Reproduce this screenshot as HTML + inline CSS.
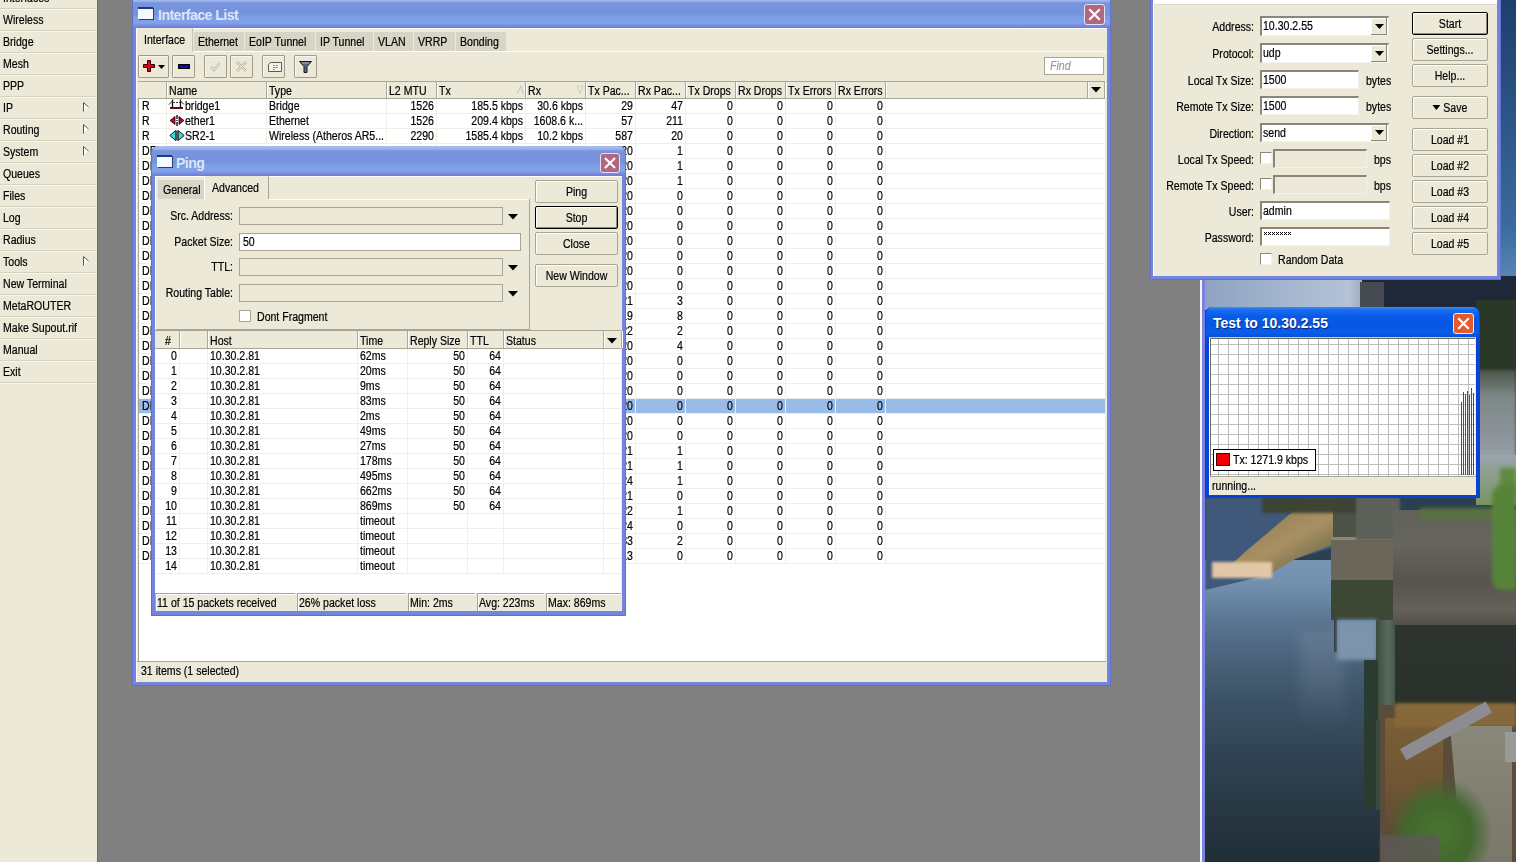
<!DOCTYPE html><html><head><meta charset="utf-8"><style>
*{box-sizing:border-box;margin:0;padding:0}
html,body{width:1516px;height:862px;overflow:hidden;background:#808080;position:relative}
body{font-family:"Liberation Sans", sans-serif;font-size:11px;color:#000}
.a{position:absolute}
.t{position:absolute;white-space:nowrap;line-height:15px;font-size:12px;margin-top:1px;transform:scaleX(0.88);transform-origin:0 0;-webkit-text-stroke:0.2px currentColor}
.r{text-align:right;transform-origin:100% 0}
.c{text-align:center;transform-origin:50% 0}
</style></head><body>
<div class="a" style="left:0;top:0;width:97px;height:862px;background:#ECE9D8"></div>
<div class="a" style="left:97px;top:0;width:1px;height:862px;background:#6F6E66"></div>
<div class="t" style="left:3px;top:-10px">Interfaces</div>
<div class="t" style="left:3px;top:12px">Wireless</div>
<div class="t" style="left:3px;top:34px">Bridge</div>
<div class="t" style="left:3px;top:56px">Mesh</div>
<div class="t" style="left:3px;top:78px">PPP</div>
<div class="t" style="left:3px;top:100px">IP</div>
<svg class="a" style="left:82px;top:101px" width="8" height="12" viewBox="0 0 8 12"><path d="M1.5 1 L1.5 10.5 L6.5 5.5 Z" fill="#fff" stroke="none"/><path d="M1.5 1.5 L1.5 10.5 M1.5 1.5 L6.5 6" stroke="#555" stroke-width="1" fill="none"/></svg>
<div class="t" style="left:3px;top:122px">Routing</div>
<svg class="a" style="left:82px;top:123px" width="8" height="12" viewBox="0 0 8 12"><path d="M1.5 1 L1.5 10.5 L6.5 5.5 Z" fill="#fff" stroke="none"/><path d="M1.5 1.5 L1.5 10.5 M1.5 1.5 L6.5 6" stroke="#555" stroke-width="1" fill="none"/></svg>
<div class="t" style="left:3px;top:144px">System</div>
<svg class="a" style="left:82px;top:145px" width="8" height="12" viewBox="0 0 8 12"><path d="M1.5 1 L1.5 10.5 L6.5 5.5 Z" fill="#fff" stroke="none"/><path d="M1.5 1.5 L1.5 10.5 M1.5 1.5 L6.5 6" stroke="#555" stroke-width="1" fill="none"/></svg>
<div class="t" style="left:3px;top:166px">Queues</div>
<div class="t" style="left:3px;top:188px">Files</div>
<div class="t" style="left:3px;top:210px">Log</div>
<div class="t" style="left:3px;top:232px">Radius</div>
<div class="t" style="left:3px;top:254px">Tools</div>
<svg class="a" style="left:82px;top:255px" width="8" height="12" viewBox="0 0 8 12"><path d="M1.5 1 L1.5 10.5 L6.5 5.5 Z" fill="#fff" stroke="none"/><path d="M1.5 1.5 L1.5 10.5 M1.5 1.5 L6.5 6" stroke="#555" stroke-width="1" fill="none"/></svg>
<div class="t" style="left:3px;top:276px">New Terminal</div>
<div class="t" style="left:3px;top:298px">MetaROUTER</div>
<div class="t" style="left:3px;top:320px">Make Supout.rif</div>
<div class="t" style="left:3px;top:342px">Manual</div>
<div class="t" style="left:3px;top:364px">Exit</div>
<div class="a" style="left:0;top:8px;width:96px;height:1px;background:#D6D2C2"></div>
<div class="a" style="left:0;top:9px;width:96px;height:1px;background:#F8F6EE"></div>
<div class="a" style="left:0;top:30px;width:96px;height:1px;background:#D6D2C2"></div>
<div class="a" style="left:0;top:31px;width:96px;height:1px;background:#F8F6EE"></div>
<div class="a" style="left:0;top:52px;width:96px;height:1px;background:#D6D2C2"></div>
<div class="a" style="left:0;top:53px;width:96px;height:1px;background:#F8F6EE"></div>
<div class="a" style="left:0;top:74px;width:96px;height:1px;background:#D6D2C2"></div>
<div class="a" style="left:0;top:75px;width:96px;height:1px;background:#F8F6EE"></div>
<div class="a" style="left:0;top:96px;width:96px;height:1px;background:#D6D2C2"></div>
<div class="a" style="left:0;top:97px;width:96px;height:1px;background:#F8F6EE"></div>
<div class="a" style="left:0;top:118px;width:96px;height:1px;background:#D6D2C2"></div>
<div class="a" style="left:0;top:119px;width:96px;height:1px;background:#F8F6EE"></div>
<div class="a" style="left:0;top:140px;width:96px;height:1px;background:#D6D2C2"></div>
<div class="a" style="left:0;top:141px;width:96px;height:1px;background:#F8F6EE"></div>
<div class="a" style="left:0;top:162px;width:96px;height:1px;background:#D6D2C2"></div>
<div class="a" style="left:0;top:163px;width:96px;height:1px;background:#F8F6EE"></div>
<div class="a" style="left:0;top:184px;width:96px;height:1px;background:#D6D2C2"></div>
<div class="a" style="left:0;top:185px;width:96px;height:1px;background:#F8F6EE"></div>
<div class="a" style="left:0;top:206px;width:96px;height:1px;background:#D6D2C2"></div>
<div class="a" style="left:0;top:207px;width:96px;height:1px;background:#F8F6EE"></div>
<div class="a" style="left:0;top:228px;width:96px;height:1px;background:#D6D2C2"></div>
<div class="a" style="left:0;top:229px;width:96px;height:1px;background:#F8F6EE"></div>
<div class="a" style="left:0;top:250px;width:96px;height:1px;background:#D6D2C2"></div>
<div class="a" style="left:0;top:251px;width:96px;height:1px;background:#F8F6EE"></div>
<div class="a" style="left:0;top:272px;width:96px;height:1px;background:#D6D2C2"></div>
<div class="a" style="left:0;top:273px;width:96px;height:1px;background:#F8F6EE"></div>
<div class="a" style="left:0;top:294px;width:96px;height:1px;background:#D6D2C2"></div>
<div class="a" style="left:0;top:295px;width:96px;height:1px;background:#F8F6EE"></div>
<div class="a" style="left:0;top:316px;width:96px;height:1px;background:#D6D2C2"></div>
<div class="a" style="left:0;top:317px;width:96px;height:1px;background:#F8F6EE"></div>
<div class="a" style="left:0;top:338px;width:96px;height:1px;background:#D6D2C2"></div>
<div class="a" style="left:0;top:339px;width:96px;height:1px;background:#F8F6EE"></div>
<div class="a" style="left:0;top:360px;width:96px;height:1px;background:#D6D2C2"></div>
<div class="a" style="left:0;top:361px;width:96px;height:1px;background:#F8F6EE"></div>
<div class="a" style="left:0;top:382px;width:96px;height:1px;background:#D6D2C2"></div>
<div class="a" style="left:0;top:383px;width:96px;height:1px;background:#F8F6EE"></div>
<div class="a" style="left:1200px;top:0;width:2px;height:862px;background:#F4F4FA"></div>
<div class="a" style="left:1202px;top:0;width:3px;height:862px;background:#7A84E0"></div>
<div class="a" style="left:1205px;top:0;width:311px;height:862px;overflow:hidden;background:#2B3F52">
<div class="a" style="left:290px;top:0px;width:21px;height:282px;background:linear-gradient(#1E3E6E,#2C5484 40%,#3A6A9E 80%,#5A88B8);"></div>
<div class="a" style="left:0px;top:276px;width:160px;height:34px;background:linear-gradient(90deg,#8FA4C2,#A4B6CE 50%,#B4C2D6 90%,#9AA8B8);"></div>
<div class="a" style="left:157px;top:276px;width:154px;height:34px;background:#1F2838;"></div>
<div class="a" style="left:155px;top:282px;width:24px;height:28px;background:#454A50;"></div>
<div class="a" style="left:271px;top:300px;width:40px;height:80px;background:#2A3828;"></div>
<div class="a" style="left:271px;top:370px;width:40px;height:90px;background:linear-gradient(#4A5448,#7E8888 30%,#8A9298 70%,#9AA2AA);filter:blur(1.5px)"></div>
<div class="a" style="left:271px;top:455px;width:40px;height:50px;background:linear-gradient(#9AA4AC,#7A9460);"></div>
<div class="a" style="left:295px;top:468px;width:16px;height:30px;background:#5E8A40;filter:blur(2px)"></div>
<div class="a" style="left:0px;top:560px;width:175px;height:302px;background:linear-gradient(#7896B4 0px,#7290AE 25px,#5A7692 60px,#4A627A 100px,#3C5266 140px,#2F4252 200px,#263641 260px,#1F2D37 302px);"></div>
<div class="a" style="left:95px;top:630px;width:45px;height:100px;background:linear-gradient(#6E8298,rgba(90,110,130,0));filter:blur(6px);opacity:0.6"></div>
<div class="a" style="left:0;top:497px;width:130px;height:95px;background:#40587A;clip-path:polygon(0 0,130px 0,130px 50px,90px 62px,55px 80px,0 93px);filter:blur(1px)"></div>
<div class="a" style="left:10px;top:497px;width:125px;height:85px;background:linear-gradient(150deg,rgba(0,0,0,0) 20%,#9A8458 35%,#A89062 55%,#7E7450 75%,#5C6050 95%);clip-path:polygon(95px 0,125px 0,125px 45px,80px 62px,50px 80px,5px 78px,30px 55px);filter:blur(1.5px)"></div>
<div class="a" style="left:128px;top:497px;width:25px;height:42px;background:#4C5246;"></div>
<div class="a" style="left:7px;top:562px;width:60px;height:16px;background:#E2C8A8;filter:blur(1.5px)"></div>
<div class="a" style="left:57px;top:497px;width:100px;height:16px;background:#3E4434;filter:blur(1.5px)"></div>
<div class="a" style="left:126px;top:537px;width:65px;height:43px;background:#6C665A;"></div>
<div class="a" style="left:126px;top:537px;width:65px;height:3px;background:#8A887E;"></div>
<div class="a" style="left:126px;top:580px;width:65px;height:40px;background:#3C4834;"></div>
<div class="a" style="left:129px;top:620px;width:3px;height:32px;background:#2A3440;"></div>
<div class="a" style="left:132px;top:620px;width:40px;height:40px;background:#7E94AC;filter:blur(2px)"></div>
<div class="a" style="left:171px;top:620px;width:24px;height:100px;background:linear-gradient(90deg,#3A4A40,#5A6A5A 50%,#3A4A40);"></div>
<div class="a" style="left:159px;top:660px;width:14px;height:150px;background:#2A3C30;"></div>
<div class="a" style="left:151px;top:497px;width:44px;height:43px;background:#5E605A;filter:blur(1px)"></div>
<div class="a" style="left:188px;top:510px;width:123px;height:117px;background:linear-gradient(#62625A,#66645E 30%,#56544E 60%,#64605A 85%,#504C46);"></div>
<div class="a" style="left:215px;top:508px;width:80px;height:12px;background:#5A7040;filter:blur(2px)"></div>
<div class="a" style="left:287px;top:485px;width:24px;height:105px;background:#58843A;filter:blur(2px);border-radius:10px 0 0 10px"></div>
<div class="a" style="left:190px;top:625px;width:121px;height:88px;background:linear-gradient(#2E3530,#2A302A);"></div>
<div class="a" style="left:171px;top:720px;width:24px;height:90px;background:#3A4A3E;"></div>
<div class="a" style="left:175px;top:705px;width:136px;height:157px;background:#5A4C3A;"></div>
<div class="a" style="left:180px;top:718px;width:58px;height:144px;background:linear-gradient(#7A6038,#6E5432 50%,#5E4A34 80%,#5A5048);"></div>
<div class="a" style="left:190px;top:703px;width:121px;height:24px;background:#86683A;filter:blur(1.5px)"></div>
<div class="a" style="left:245px;top:726px;width:62px;height:136px;background:linear-gradient(#8A887A,#7A786A);clip-path:polygon(0 0,100% 0,100% 100%,12px 100%)"></div>
<div class="a" style="left:300px;top:732px;width:11px;height:30px;background:#9A9A98;"></div>
<div class="a" style="left:195px;top:749px;width:98px;height:13px;background:#8C8C92;transform:rotate(-29deg);transform-origin:0 0"></div>
<div class="a" style="left:185px;top:780px;width:100px;height:82px;background:radial-gradient(ellipse at 50% 65%,#4A7630 0%,#42682E 45%,rgba(66,104,46,0) 75%);"></div>
<div class="a" style="left:175px;top:835px;width:60px;height:27px;background:#5E5856;filter:blur(1px);opacity:0.8"></div>
</div>
<div class="a" style="left:1150px;top:-40px;width:351px;height:320px;background:#7485DE;box-shadow:inset 1px 0 0 #6272CC,inset -1px 0 0 #6272CC,inset 0 -1px 0 #5E6ECA"></div>
<div class="a" style="left:1153px;top:0;width:344px;height:276px;background:#ECE9D8;border-left:1px solid #fff"></div>
<div class="a" style="left:1154px;top:0;width:343px;height:4px;background:#fff"></div>
<div class="a" style="left:1154px;top:4px;width:343px;height:1px;background:#DDDACB"></div>
<div class="t r" style="left:1150px;width:104px;top:19px">Address:</div>
<div class="t r" style="left:1150px;width:104px;top:46px">Protocol:</div>
<div class="t r" style="left:1150px;width:104px;top:73px">Local Tx Size:</div>
<div class="t r" style="left:1150px;width:104px;top:99px">Remote Tx Size:</div>
<div class="t r" style="left:1150px;width:104px;top:126px">Direction:</div>
<div class="t r" style="left:1150px;width:104px;top:152px">Local Tx Speed:</div>
<div class="t r" style="left:1150px;width:104px;top:178px">Remote Tx Speed:</div>
<div class="t r" style="left:1150px;width:104px;top:204px">User:</div>
<div class="t r" style="left:1150px;width:104px;top:230px">Password:</div>
<div class="a" style="left:1260px;top:16px;width:129px;height:20px;background:#fff;border-top:2px solid #8A877A;border-left:2px solid #8A877A;border-right:1px solid #F4F2EA;border-bottom:1px solid #F4F2EA"></div>
<div class="t" style="left:1263px;top:18px">10.30.2.55</div>
<div class="a" style="left:1371px;top:18px;width:16px;height:17px;background:#ECE9D8;border-right:1px solid #8A877A;border-bottom:1px solid #8A877A;box-shadow:inset 1px 1px 0 #fff"></div>
<svg class="a" style="left:1375px;top:24px" width="9" height="5"><path d="M0 0h9l-4.5 5z" fill="#000"/></svg>
<div class="a" style="left:1260px;top:43px;width:129px;height:20px;background:#fff;border-top:2px solid #8A877A;border-left:2px solid #8A877A;border-right:1px solid #F4F2EA;border-bottom:1px solid #F4F2EA"></div>
<div class="t" style="left:1263px;top:45px">udp</div>
<div class="a" style="left:1371px;top:45px;width:16px;height:17px;background:#ECE9D8;border-right:1px solid #8A877A;border-bottom:1px solid #8A877A;box-shadow:inset 1px 1px 0 #fff"></div>
<svg class="a" style="left:1375px;top:51px" width="9" height="5"><path d="M0 0h9l-4.5 5z" fill="#000"/></svg>
<div class="a" style="left:1260px;top:70px;width:99px;height:19px;background:#fff;border-top:2px solid #8A877A;border-left:2px solid #8A877A;border-right:1px solid #F4F2EA;border-bottom:1px solid #F4F2EA"></div>
<div class="t" style="left:1263px;top:72px">1500</div>
<div class="t" style="left:1366px;top:73px">bytes</div>
<div class="a" style="left:1260px;top:96px;width:99px;height:19px;background:#fff;border-top:2px solid #8A877A;border-left:2px solid #8A877A;border-right:1px solid #F4F2EA;border-bottom:1px solid #F4F2EA"></div>
<div class="t" style="left:1263px;top:98px">1500</div>
<div class="t" style="left:1366px;top:99px">bytes</div>
<div class="a" style="left:1260px;top:123px;width:129px;height:19px;background:#fff;border-top:2px solid #8A877A;border-left:2px solid #8A877A;border-right:1px solid #F4F2EA;border-bottom:1px solid #F4F2EA"></div>
<div class="t" style="left:1263px;top:125px">send</div>
<div class="a" style="left:1371px;top:125px;width:16px;height:16px;background:#ECE9D8;border-right:1px solid #8A877A;border-bottom:1px solid #8A877A;box-shadow:inset 1px 1px 0 #fff"></div>
<svg class="a" style="left:1375px;top:130px" width="9" height="5"><path d="M0 0h9l-4.5 5z" fill="#000"/></svg>
<div class="a" style="left:1260px;top:152px;width:12px;height:12px;background:#fff;border-top:1px solid #8A877A;border-left:1px solid #8A877A;border-right:1px solid #F4F2EA;border-bottom:1px solid #F4F2EA"></div>
<div class="a" style="left:1273px;top:149px;width:94px;height:19px;background:#ECE9D8;border-top:2px solid #8A877A;border-left:2px solid #8A877A;border-right:1px solid #F4F2EA;border-bottom:1px solid #F4F2EA"></div>
<div class="t" style="left:1374px;top:152px">bps</div>
<div class="a" style="left:1260px;top:178px;width:12px;height:12px;background:#fff;border-top:1px solid #8A877A;border-left:1px solid #8A877A;border-right:1px solid #F4F2EA;border-bottom:1px solid #F4F2EA"></div>
<div class="a" style="left:1273px;top:175px;width:94px;height:19px;background:#ECE9D8;border-top:2px solid #8A877A;border-left:2px solid #8A877A;border-right:1px solid #F4F2EA;border-bottom:1px solid #F4F2EA"></div>
<div class="t" style="left:1374px;top:178px">bps</div>
<div class="a" style="left:1260px;top:201px;width:130px;height:19px;background:#fff;border-top:2px solid #8A877A;border-left:2px solid #8A877A;border-right:1px solid #F4F2EA;border-bottom:1px solid #F4F2EA"></div>
<div class="t" style="left:1263px;top:203px">admin</div>
<div class="a" style="left:1260px;top:227px;width:130px;height:19px;background:#fff;border-top:2px solid #8A877A;border-left:2px solid #8A877A;border-right:1px solid #F4F2EA;border-bottom:1px solid #F4F2EA"></div>
<svg class="a" style="left:1264px;top:232px" width="28" height="3" shape-rendering="crispEdges"><rect x="0" y="0" width="1" height="1"/><rect x="2" y="0" width="1" height="1"/><rect x="1" y="1" width="1" height="1"/><rect x="0" y="2" width="1" height="1"/><rect x="2" y="2" width="1" height="1"/><rect x="4" y="0" width="1" height="1"/><rect x="6" y="0" width="1" height="1"/><rect x="5" y="1" width="1" height="1"/><rect x="4" y="2" width="1" height="1"/><rect x="6" y="2" width="1" height="1"/><rect x="8" y="0" width="1" height="1"/><rect x="10" y="0" width="1" height="1"/><rect x="9" y="1" width="1" height="1"/><rect x="8" y="2" width="1" height="1"/><rect x="10" y="2" width="1" height="1"/><rect x="12" y="0" width="1" height="1"/><rect x="14" y="0" width="1" height="1"/><rect x="13" y="1" width="1" height="1"/><rect x="12" y="2" width="1" height="1"/><rect x="14" y="2" width="1" height="1"/><rect x="16" y="0" width="1" height="1"/><rect x="18" y="0" width="1" height="1"/><rect x="17" y="1" width="1" height="1"/><rect x="16" y="2" width="1" height="1"/><rect x="18" y="2" width="1" height="1"/><rect x="20" y="0" width="1" height="1"/><rect x="22" y="0" width="1" height="1"/><rect x="21" y="1" width="1" height="1"/><rect x="20" y="2" width="1" height="1"/><rect x="22" y="2" width="1" height="1"/><rect x="24" y="0" width="1" height="1"/><rect x="26" y="0" width="1" height="1"/><rect x="25" y="1" width="1" height="1"/><rect x="24" y="2" width="1" height="1"/><rect x="26" y="2" width="1" height="1"/></svg>
<div class="a" style="left:1260px;top:253px;width:12px;height:12px;background:#fff;border-top:1px solid #8A877A;border-left:1px solid #8A877A;border-right:1px solid #F4F2EA;border-bottom:1px solid #F4F2EA"></div>
<div class="t" style="left:1278px;top:252px">Random Data</div>
<div class="a" style="left:1412px;top:12px;width:76px;height:23px;border:1px solid #000;border-radius:2px;background:#ECE9D8;box-shadow:inset 1px 1px 0 #fff, inset -1px -1px 0 #8E8B7C"></div>
<div class="t c" style="left:1412px;top:16px;width:76px">Start</div>
<div class="a" style="left:1412px;top:38px;width:76px;height:23px;border:1px solid #A8A594;border-radius:2px;background:#ECE9D8;box-shadow:inset 1px 1px 0 #fff"></div>
<div class="t c" style="left:1412px;top:42px;width:76px">Settings...</div>
<div class="a" style="left:1412px;top:64px;width:76px;height:23px;border:1px solid #A8A594;border-radius:2px;background:#ECE9D8;box-shadow:inset 1px 1px 0 #fff"></div>
<div class="t c" style="left:1412px;top:68px;width:76px">Help...</div>
<div class="a" style="left:1412px;top:96px;width:76px;height:23px;border:1px solid #A8A594;border-radius:2px;background:#ECE9D8;box-shadow:inset 1px 1px 0 #fff"></div>
<div class="t c" style="left:1412px;top:100px;width:76px"><svg width="9" height="6" style="margin-right:3px;vertical-align:1px"><path d="M0 0h9l-4.5 5z" fill="#000"/></svg>Save</div>
<div class="a" style="left:1412px;top:128px;width:76px;height:23px;border:1px solid #A8A594;border-radius:2px;background:#ECE9D8;box-shadow:inset 1px 1px 0 #fff"></div>
<div class="t c" style="left:1412px;top:132px;width:76px">Load #1</div>
<div class="a" style="left:1412px;top:154px;width:76px;height:23px;border:1px solid #A8A594;border-radius:2px;background:#ECE9D8;box-shadow:inset 1px 1px 0 #fff"></div>
<div class="t c" style="left:1412px;top:158px;width:76px">Load #2</div>
<div class="a" style="left:1412px;top:180px;width:76px;height:23px;border:1px solid #A8A594;border-radius:2px;background:#ECE9D8;box-shadow:inset 1px 1px 0 #fff"></div>
<div class="t c" style="left:1412px;top:184px;width:76px">Load #3</div>
<div class="a" style="left:1412px;top:206px;width:76px;height:23px;border:1px solid #A8A594;border-radius:2px;background:#ECE9D8;box-shadow:inset 1px 1px 0 #fff"></div>
<div class="t c" style="left:1412px;top:210px;width:76px">Load #4</div>
<div class="a" style="left:1412px;top:232px;width:76px;height:23px;border:1px solid #A8A594;border-radius:2px;background:#ECE9D8;box-shadow:inset 1px 1px 0 #fff"></div>
<div class="t c" style="left:1412px;top:236px;width:76px">Load #5</div>
<div class="a" style="left:1205px;top:307px;width:275px;height:191px;background:#0842D6;border-radius:7px 7px 0 0"></div>
<div class="a" style="left:1206px;top:307px;width:273px;height:30px;border-radius:7px 7px 0 0;background:linear-gradient(#3C8CF8 0%,#1A6CF0 10%,#0A5CE8 30%,#0456E4 60%,#0A5EEA 85%,#0650DC 100%)"></div>
<div class="a" style="left:1213px;top:315px;font-weight:bold;font-size:14px;line-height:16px;color:#fff;white-space:nowrap;text-shadow:1px 1px 0 #0A2A80">Test to 10.30.2.55</div>
<div class="a" style="left:1453px;top:313px;width:21px;height:21px;background:#E25A30;border:1px solid #F4F0EE;border-radius:3px"></div>
<svg class="a" style="left:1453px;top:313px" width="21" height="21" viewBox="0 0 21 21"><path d="M6 6 L15 15 M15 6 L6 15" stroke="#fff" stroke-width="2.2" stroke-linecap="square"/></svg>
<div class="a" style="left:1209px;top:337px;width:267px;height:158px;background:#ECE9D8;border-left:1px solid #fff;border-top:1px solid #B8C8F0"></div>
<div class="a" style="left:1210px;top:338px;width:265px;height:138px;background-color:#fff;background-image:repeating-linear-gradient(90deg,transparent 0 7px,#BDBDBD 7px 8px,transparent 8px 10px),repeating-linear-gradient(180deg,transparent 0 5px,#BDBDBD 5px 6px,transparent 6px 10px);border-top:1px solid #6E6C64;border-left:1px solid #6E6C64"></div>
<div class="a" style="left:1461px;top:402px;width:1px;height:73px;background:#D01818"></div>
<div class="a" style="left:1463px;top:392px;width:1px;height:83px;background:#D01818"></div>
<div class="a" style="left:1465px;top:394px;width:1px;height:81px;background:#D01818"></div>
<div class="a" style="left:1467px;top:391px;width:1px;height:84px;background:#D01818"></div>
<div class="a" style="left:1469px;top:395px;width:1px;height:80px;background:#D01818"></div>
<div class="a" style="left:1471px;top:388px;width:1px;height:87px;background:#D01818"></div>
<div class="a" style="left:1473px;top:393px;width:1px;height:82px;background:#D01818"></div>
<div class="a" style="left:1213px;top:449px;width:103px;height:22px;background:#fff;border:1px solid #000"></div>
<div class="a" style="left:1216px;top:453px;width:14px;height:13px;background:#F00000;border:1px solid #500"></div>
<div class="t" style="left:1233px;top:452px">Tx: 1271.9 kbps</div>
<div class="a" style="left:1210px;top:476px;width:266px;height:1px;background:#A8A594"></div>
<div class="t" style="left:1212px;top:478px">running...</div>
<div class="a" style="left:132px;top:-2px;width:979px;height:688px;background:#7485DE;border-radius:2px 2px 0 0;box-shadow:inset 1px 0 0 #6272CC,inset -1px 0 0 #6272CC,inset 0 -1px 0 #5E6ECA"></div>
<div class="a" style="left:133px;top:-2px;width:977px;height:30px;background:linear-gradient(#A6C0F2 0px,#9CB4EE 3px,#7994DC 5px,#7592DC 16px,#7E9EE6 19px,#80A2E8 25px,#7888DC 28px,#6E7CD0 30px);border-radius:2px 2px 0 0"></div>
<div class="a" style="left:136px;top:28px;width:971px;height:654px;background:#ECE9D8;border-top:1px solid #fff;border-left:1px solid #fff"></div>
<div class="a" style="left:138px;top:7px;width:15px;height:12px;background:#F4F8FF;border-top:2px solid #1E3C78;box-shadow:1px 1px 0 #2A3C70"></div>
<div class="a" style="left:158px;top:8px;font-weight:bold;font-size:14px;letter-spacing:-0.5px;line-height:15px;color:#DCE6FA;white-space:nowrap">Interface List</div>
<div class="a" style="left:1084px;top:4px;width:21px;height:21px;background:#B0687E;border:1px solid #E8E0F4;border-radius:3px"></div>
<svg class="a" style="left:1084px;top:4px" width="21" height="21" viewBox="0 0 21 21"><path d="M6 6 L15 15 M15 6 L6 15" stroke="#fff" stroke-width="2.2" stroke-linecap="square"/></svg>
<div class="a" style="left:193px;top:51px;width:913px;height:1px;background:#FFFFFF"></div>
<div class="a" style="left:136px;top:28px;width:57px;height:24px;background:#ECE9D8;border-left:1px solid #fff;border-right:1px solid #C8C4B4"></div>
<div class="t" style="left:144px;top:32px">Interface</div>
<div class="a" style="left:194px;top:32px;width:50px;height:19px;background:#D8D4C6"></div>
<div class="t" style="left:198px;top:34px">Ethernet</div>
<div class="a" style="left:245px;top:32px;width:70px;height:19px;background:#D8D4C6"></div>
<div class="t" style="left:249px;top:34px">EoIP Tunnel</div>
<div class="a" style="left:316px;top:32px;width:57px;height:19px;background:#D8D4C6"></div>
<div class="t" style="left:320px;top:34px">IP Tunnel</div>
<div class="a" style="left:374px;top:32px;width:39px;height:19px;background:#D8D4C6"></div>
<div class="t" style="left:378px;top:34px">VLAN</div>
<div class="a" style="left:414px;top:32px;width:41px;height:19px;background:#D8D4C6"></div>
<div class="t" style="left:418px;top:34px">VRRP</div>
<div class="a" style="left:456px;top:32px;width:50px;height:19px;background:#D8D4C6"></div>
<div class="t" style="left:460px;top:34px">Bonding</div>
<div class="a" style="left:138px;top:55px;width:31px;height:23px;border:1px solid #A09C8C;border-radius:1px;background:#ECE9D8;box-shadow:inset 1px 1px 0 #F8F6EE"></div>
<div class="a" style="left:172px;top:55px;width:23px;height:23px;border:1px solid #A09C8C;border-radius:1px;background:#ECE9D8;box-shadow:inset 1px 1px 0 #F8F6EE"></div>
<div class="a" style="left:204px;top:55px;width:23px;height:23px;border:1px solid #A09C8C;border-radius:1px;background:#ECE9D8;box-shadow:inset 1px 1px 0 #F8F6EE"></div>
<div class="a" style="left:230px;top:55px;width:23px;height:23px;border:1px solid #A09C8C;border-radius:1px;background:#ECE9D8;box-shadow:inset 1px 1px 0 #F8F6EE"></div>
<div class="a" style="left:262px;top:55px;width:23px;height:23px;border:1px solid #A09C8C;border-radius:1px;background:#ECE9D8;box-shadow:inset 1px 1px 0 #F8F6EE"></div>
<div class="a" style="left:294px;top:55px;width:23px;height:23px;border:1px solid #A09C8C;border-radius:1px;background:#ECE9D8;box-shadow:inset 1px 1px 0 #F8F6EE"></div>
<svg class="a" style="left:143px;top:60px" width="24" height="14" viewBox="0 0 24 14"><path d="M4.5 0.5h3v4h4v3h-4v4h-3v-4h-4v-3h4z" fill="#E00018" stroke="#300" stroke-width="1"/><path d="M15 5h7l-3.5 4z" fill="#000"/></svg>
<div class="a" style="left:178px;top:64px;width:12px;height:5px;background:#0A0AB0;border:1px solid #000"></div>
<svg class="a" style="left:204px;top:55px" width="23" height="23" viewBox="0 0 23 23"><path d="M7 12 L10 15 L16 8" stroke="#BDB9A8" stroke-width="2.5" fill="none"/><path d="M7 12 L10 15 L16 8" stroke="#F4F2EA" stroke-width="1" fill="none"/></svg>
<svg class="a" style="left:230px;top:55px" width="23" height="23" viewBox="0 0 23 23"><path d="M7 7 L16 16 M16 7 L7 16" stroke="#BDB9A8" stroke-width="2.6" fill="none"/><path d="M7 7 L16 16 M16 7 L7 16" stroke="#F4F2EA" stroke-width="1" fill="none"/></svg>
<svg class="a" style="left:262px;top:55px" width="23" height="23" viewBox="0 0 23 23"><path d="M6.5 9.5 l2-2 h11 v9 h-13 z" stroke="#5A5A56" stroke-width="1" fill="#F4F2EA"/><path d="M11 10.5h2 M14 10.5h2 M11 12.5h5 M11 14.5h2" stroke="#9A9890" stroke-width="1"/></svg>
<svg class="a" style="left:294px;top:55px" width="23" height="23" viewBox="0 0 23 23"><path d="M5.5 6.5 h12 l-4.5 5 v6 h-3 v-6 z" fill="#5A6A80" stroke="#101820" stroke-width="1"/><path d="M8 8h7" stroke="#A0B0C8" stroke-width="1"/></svg>
<div class="a" style="left:1044px;top:57px;width:60px;height:18px;background:#fff;border:1px solid #A8A594"></div>
<div class="t" style="left:1050px;top:58px;color:#9A9A9A;font-style:italic">Find</div>
<div class="a" style="left:138px;top:81px;width:967px;height:581px;background:#fff;border-left:1px solid #A8A594"></div>
<div class="a" style="left:138px;top:81px;width:967px;height:18px;background:#ECE9D8;border-top:1px solid #A8A594;border-bottom:1px solid #A8A594"></div>
<div class="a" style="left:166px;top:82px;width:1px;height:16px;background:#ACA899"></div>
<div class="a" style="left:167px;top:82px;width:1px;height:16px;background:#FFFFFF"></div>
<div class="a" style="left:266px;top:82px;width:1px;height:16px;background:#ACA899"></div>
<div class="a" style="left:267px;top:82px;width:1px;height:16px;background:#FFFFFF"></div>
<div class="t" style="left:169px;top:83px">Name</div>
<div class="a" style="left:386px;top:82px;width:1px;height:16px;background:#ACA899"></div>
<div class="a" style="left:387px;top:82px;width:1px;height:16px;background:#FFFFFF"></div>
<div class="t" style="left:269px;top:83px">Type</div>
<div class="a" style="left:436px;top:82px;width:1px;height:16px;background:#ACA899"></div>
<div class="a" style="left:437px;top:82px;width:1px;height:16px;background:#FFFFFF"></div>
<div class="t" style="left:389px;top:83px">L2 MTU</div>
<div class="a" style="left:525px;top:82px;width:1px;height:16px;background:#ACA899"></div>
<div class="a" style="left:526px;top:82px;width:1px;height:16px;background:#FFFFFF"></div>
<div class="t" style="left:439px;top:83px">Tx</div>
<div class="a" style="left:585px;top:82px;width:1px;height:16px;background:#ACA899"></div>
<div class="a" style="left:586px;top:82px;width:1px;height:16px;background:#FFFFFF"></div>
<div class="t" style="left:528px;top:83px">Rx</div>
<div class="a" style="left:635px;top:82px;width:1px;height:16px;background:#ACA899"></div>
<div class="a" style="left:636px;top:82px;width:1px;height:16px;background:#FFFFFF"></div>
<div class="t" style="left:588px;top:83px">Tx Pac...</div>
<div class="a" style="left:685px;top:82px;width:1px;height:16px;background:#ACA899"></div>
<div class="a" style="left:686px;top:82px;width:1px;height:16px;background:#FFFFFF"></div>
<div class="t" style="left:638px;top:83px">Rx Pac...</div>
<div class="a" style="left:735px;top:82px;width:1px;height:16px;background:#ACA899"></div>
<div class="a" style="left:736px;top:82px;width:1px;height:16px;background:#FFFFFF"></div>
<div class="t" style="left:688px;top:83px">Tx Drops</div>
<div class="a" style="left:785px;top:82px;width:1px;height:16px;background:#ACA899"></div>
<div class="a" style="left:786px;top:82px;width:1px;height:16px;background:#FFFFFF"></div>
<div class="t" style="left:738px;top:83px">Rx Drops</div>
<div class="a" style="left:835px;top:82px;width:1px;height:16px;background:#ACA899"></div>
<div class="a" style="left:836px;top:82px;width:1px;height:16px;background:#FFFFFF"></div>
<div class="t" style="left:788px;top:83px">Tx Errors</div>
<div class="a" style="left:885px;top:82px;width:1px;height:16px;background:#ACA899"></div>
<div class="a" style="left:886px;top:82px;width:1px;height:16px;background:#FFFFFF"></div>
<div class="t" style="left:838px;top:83px">Rx Errors</div>
<div class="a" style="left:1087px;top:82px;width:1px;height:16px;background:#ACA899"></div>
<div class="a" style="left:1088px;top:82px;width:1px;height:16px;background:#FFFFFF"></div>
<div class="a" style="left:1104px;top:82px;width:1px;height:16px;background:#ACA899"></div>
<div class="a" style="left:1105px;top:82px;width:1px;height:16px;background:#FFFFFF"></div>
<svg class="a" style="left:516px;top:85px" width="8" height="10"><path d="M1 9 L5 1 L7 9" stroke="#C8C4B4" fill="none"/></svg>
<svg class="a" style="left:576px;top:85px" width="8" height="10"><path d="M1 1 L4 9 L7 1 Z" stroke="#D4D0C0" fill="none"/></svg>
<svg class="a" style="left:1091px;top:87px" width="10" height="6"><path d="M0 0h10l-5 5.5z" fill="#000"/></svg>
<div class="a" style="left:139px;top:113px;width:966px;height:1px;background:#EFEFE8"></div>
<div class="a" style="left:139px;top:128px;width:966px;height:1px;background:#EFEFE8"></div>
<div class="a" style="left:139px;top:143px;width:966px;height:1px;background:#EFEFE8"></div>
<div class="a" style="left:139px;top:158px;width:966px;height:1px;background:#EFEFE8"></div>
<div class="a" style="left:139px;top:173px;width:966px;height:1px;background:#EFEFE8"></div>
<div class="a" style="left:139px;top:188px;width:966px;height:1px;background:#EFEFE8"></div>
<div class="a" style="left:139px;top:203px;width:966px;height:1px;background:#EFEFE8"></div>
<div class="a" style="left:139px;top:218px;width:966px;height:1px;background:#EFEFE8"></div>
<div class="a" style="left:139px;top:233px;width:966px;height:1px;background:#EFEFE8"></div>
<div class="a" style="left:139px;top:248px;width:966px;height:1px;background:#EFEFE8"></div>
<div class="a" style="left:139px;top:263px;width:966px;height:1px;background:#EFEFE8"></div>
<div class="a" style="left:139px;top:278px;width:966px;height:1px;background:#EFEFE8"></div>
<div class="a" style="left:139px;top:293px;width:966px;height:1px;background:#EFEFE8"></div>
<div class="a" style="left:139px;top:308px;width:966px;height:1px;background:#EFEFE8"></div>
<div class="a" style="left:139px;top:323px;width:966px;height:1px;background:#EFEFE8"></div>
<div class="a" style="left:139px;top:338px;width:966px;height:1px;background:#EFEFE8"></div>
<div class="a" style="left:139px;top:353px;width:966px;height:1px;background:#EFEFE8"></div>
<div class="a" style="left:139px;top:368px;width:966px;height:1px;background:#EFEFE8"></div>
<div class="a" style="left:139px;top:383px;width:966px;height:1px;background:#EFEFE8"></div>
<div class="a" style="left:139px;top:398px;width:966px;height:1px;background:#EFEFE8"></div>
<div class="a" style="left:139px;top:399px;width:966px;height:14px;background:#99BBE8"></div>
<div class="a" style="left:139px;top:413px;width:966px;height:1px;background:#EFEFE8"></div>
<div class="a" style="left:139px;top:428px;width:966px;height:1px;background:#EFEFE8"></div>
<div class="a" style="left:139px;top:443px;width:966px;height:1px;background:#EFEFE8"></div>
<div class="a" style="left:139px;top:458px;width:966px;height:1px;background:#EFEFE8"></div>
<div class="a" style="left:139px;top:473px;width:966px;height:1px;background:#EFEFE8"></div>
<div class="a" style="left:139px;top:488px;width:966px;height:1px;background:#EFEFE8"></div>
<div class="a" style="left:139px;top:503px;width:966px;height:1px;background:#EFEFE8"></div>
<div class="a" style="left:139px;top:518px;width:966px;height:1px;background:#EFEFE8"></div>
<div class="a" style="left:139px;top:533px;width:966px;height:1px;background:#EFEFE8"></div>
<div class="a" style="left:139px;top:548px;width:966px;height:1px;background:#EFEFE8"></div>
<div class="a" style="left:139px;top:563px;width:966px;height:1px;background:#EFEFE8"></div>
<div class="a" style="left:166px;top:99px;width:1px;height:465px;background:#F0EFE6"></div>
<div class="a" style="left:266px;top:99px;width:1px;height:465px;background:#F0EFE6"></div>
<div class="a" style="left:386px;top:99px;width:1px;height:465px;background:#F0EFE6"></div>
<div class="a" style="left:436px;top:99px;width:1px;height:465px;background:#F0EFE6"></div>
<div class="a" style="left:525px;top:99px;width:1px;height:465px;background:#F0EFE6"></div>
<div class="a" style="left:585px;top:99px;width:1px;height:465px;background:#F0EFE6"></div>
<div class="a" style="left:635px;top:99px;width:1px;height:465px;background:#F0EFE6"></div>
<div class="a" style="left:685px;top:99px;width:1px;height:465px;background:#F0EFE6"></div>
<div class="a" style="left:735px;top:99px;width:1px;height:465px;background:#F0EFE6"></div>
<div class="a" style="left:785px;top:99px;width:1px;height:465px;background:#F0EFE6"></div>
<div class="a" style="left:835px;top:99px;width:1px;height:465px;background:#F0EFE6"></div>
<div class="a" style="left:885px;top:99px;width:1px;height:465px;background:#F0EFE6"></div>
<div class="t" style="left:142px;top:98px">R</div>
<div class="t" style="left:185px;top:98px">bridge1</div>
<div class="t" style="left:269px;top:98px">Bridge</div>
<div class="t r" style="left:386px;width:48px;top:98px">1526</div>
<div class="t r" style="left:436px;width:87px;top:98px">185.5 kbps</div>
<div class="t r" style="left:525px;width:58px;top:98px">30.6 kbps</div>
<div class="t r" style="left:585px;width:48px;top:98px">29</div>
<div class="t r" style="left:635px;width:48px;top:98px">47</div>
<div class="t r" style="left:685px;width:48px;top:98px">0</div>
<div class="t r" style="left:735px;width:48px;top:98px">0</div>
<div class="t r" style="left:785px;width:48px;top:98px">0</div>
<div class="t r" style="left:835px;width:48px;top:98px">0</div>
<div class="t" style="left:142px;top:113px">R</div>
<div class="t" style="left:185px;top:113px">ether1</div>
<div class="t" style="left:269px;top:113px">Ethernet</div>
<div class="t r" style="left:386px;width:48px;top:113px">1526</div>
<div class="t r" style="left:436px;width:87px;top:113px">209.4 kbps</div>
<div class="t r" style="left:525px;width:58px;top:113px">1608.6 k...</div>
<div class="t r" style="left:585px;width:48px;top:113px">57</div>
<div class="t r" style="left:635px;width:48px;top:113px">211</div>
<div class="t r" style="left:685px;width:48px;top:113px">0</div>
<div class="t r" style="left:735px;width:48px;top:113px">0</div>
<div class="t r" style="left:785px;width:48px;top:113px">0</div>
<div class="t r" style="left:835px;width:48px;top:113px">0</div>
<div class="t" style="left:142px;top:128px">R</div>
<div class="t" style="left:185px;top:128px">SR2-1</div>
<div class="t" style="left:269px;top:128px">Wireless (Atheros AR5...</div>
<div class="t r" style="left:386px;width:48px;top:128px">2290</div>
<div class="t r" style="left:436px;width:87px;top:128px">1585.4 kbps</div>
<div class="t r" style="left:525px;width:58px;top:128px">10.2 kbps</div>
<div class="t r" style="left:585px;width:48px;top:128px">587</div>
<div class="t r" style="left:635px;width:48px;top:128px">20</div>
<div class="t r" style="left:685px;width:48px;top:128px">0</div>
<div class="t r" style="left:735px;width:48px;top:128px">0</div>
<div class="t r" style="left:785px;width:48px;top:128px">0</div>
<div class="t r" style="left:835px;width:48px;top:128px">0</div>
<div class="t" style="left:142px;top:143px">DR</div>
<div class="t r" style="left:585px;width:48px;top:143px">20</div>
<div class="t r" style="left:635px;width:48px;top:143px">1</div>
<div class="t r" style="left:685px;width:48px;top:143px">0</div>
<div class="t r" style="left:735px;width:48px;top:143px">0</div>
<div class="t r" style="left:785px;width:48px;top:143px">0</div>
<div class="t r" style="left:835px;width:48px;top:143px">0</div>
<div class="t" style="left:142px;top:158px">DR</div>
<div class="t r" style="left:585px;width:48px;top:158px">20</div>
<div class="t r" style="left:635px;width:48px;top:158px">1</div>
<div class="t r" style="left:685px;width:48px;top:158px">0</div>
<div class="t r" style="left:735px;width:48px;top:158px">0</div>
<div class="t r" style="left:785px;width:48px;top:158px">0</div>
<div class="t r" style="left:835px;width:48px;top:158px">0</div>
<div class="t" style="left:142px;top:173px">DR</div>
<div class="t r" style="left:585px;width:48px;top:173px">20</div>
<div class="t r" style="left:635px;width:48px;top:173px">1</div>
<div class="t r" style="left:685px;width:48px;top:173px">0</div>
<div class="t r" style="left:735px;width:48px;top:173px">0</div>
<div class="t r" style="left:785px;width:48px;top:173px">0</div>
<div class="t r" style="left:835px;width:48px;top:173px">0</div>
<div class="t" style="left:142px;top:188px">DR</div>
<div class="t r" style="left:585px;width:48px;top:188px">20</div>
<div class="t r" style="left:635px;width:48px;top:188px">0</div>
<div class="t r" style="left:685px;width:48px;top:188px">0</div>
<div class="t r" style="left:735px;width:48px;top:188px">0</div>
<div class="t r" style="left:785px;width:48px;top:188px">0</div>
<div class="t r" style="left:835px;width:48px;top:188px">0</div>
<div class="t" style="left:142px;top:203px">DR</div>
<div class="t r" style="left:585px;width:48px;top:203px">20</div>
<div class="t r" style="left:635px;width:48px;top:203px">0</div>
<div class="t r" style="left:685px;width:48px;top:203px">0</div>
<div class="t r" style="left:735px;width:48px;top:203px">0</div>
<div class="t r" style="left:785px;width:48px;top:203px">0</div>
<div class="t r" style="left:835px;width:48px;top:203px">0</div>
<div class="t" style="left:142px;top:218px">DR</div>
<div class="t r" style="left:585px;width:48px;top:218px">20</div>
<div class="t r" style="left:635px;width:48px;top:218px">0</div>
<div class="t r" style="left:685px;width:48px;top:218px">0</div>
<div class="t r" style="left:735px;width:48px;top:218px">0</div>
<div class="t r" style="left:785px;width:48px;top:218px">0</div>
<div class="t r" style="left:835px;width:48px;top:218px">0</div>
<div class="t" style="left:142px;top:233px">DR</div>
<div class="t r" style="left:585px;width:48px;top:233px">20</div>
<div class="t r" style="left:635px;width:48px;top:233px">0</div>
<div class="t r" style="left:685px;width:48px;top:233px">0</div>
<div class="t r" style="left:735px;width:48px;top:233px">0</div>
<div class="t r" style="left:785px;width:48px;top:233px">0</div>
<div class="t r" style="left:835px;width:48px;top:233px">0</div>
<div class="t" style="left:142px;top:248px">DR</div>
<div class="t r" style="left:585px;width:48px;top:248px">20</div>
<div class="t r" style="left:635px;width:48px;top:248px">0</div>
<div class="t r" style="left:685px;width:48px;top:248px">0</div>
<div class="t r" style="left:735px;width:48px;top:248px">0</div>
<div class="t r" style="left:785px;width:48px;top:248px">0</div>
<div class="t r" style="left:835px;width:48px;top:248px">0</div>
<div class="t" style="left:142px;top:263px">DR</div>
<div class="t r" style="left:585px;width:48px;top:263px">20</div>
<div class="t r" style="left:635px;width:48px;top:263px">0</div>
<div class="t r" style="left:685px;width:48px;top:263px">0</div>
<div class="t r" style="left:735px;width:48px;top:263px">0</div>
<div class="t r" style="left:785px;width:48px;top:263px">0</div>
<div class="t r" style="left:835px;width:48px;top:263px">0</div>
<div class="t" style="left:142px;top:278px">DR</div>
<div class="t r" style="left:585px;width:48px;top:278px">20</div>
<div class="t r" style="left:635px;width:48px;top:278px">0</div>
<div class="t r" style="left:685px;width:48px;top:278px">0</div>
<div class="t r" style="left:735px;width:48px;top:278px">0</div>
<div class="t r" style="left:785px;width:48px;top:278px">0</div>
<div class="t r" style="left:835px;width:48px;top:278px">0</div>
<div class="t" style="left:142px;top:293px">DR</div>
<div class="t r" style="left:585px;width:48px;top:293px">21</div>
<div class="t r" style="left:635px;width:48px;top:293px">3</div>
<div class="t r" style="left:685px;width:48px;top:293px">0</div>
<div class="t r" style="left:735px;width:48px;top:293px">0</div>
<div class="t r" style="left:785px;width:48px;top:293px">0</div>
<div class="t r" style="left:835px;width:48px;top:293px">0</div>
<div class="t" style="left:142px;top:308px">DR</div>
<div class="t r" style="left:585px;width:48px;top:308px">19</div>
<div class="t r" style="left:635px;width:48px;top:308px">8</div>
<div class="t r" style="left:685px;width:48px;top:308px">0</div>
<div class="t r" style="left:735px;width:48px;top:308px">0</div>
<div class="t r" style="left:785px;width:48px;top:308px">0</div>
<div class="t r" style="left:835px;width:48px;top:308px">0</div>
<div class="t" style="left:142px;top:323px">DR</div>
<div class="t r" style="left:585px;width:48px;top:323px">22</div>
<div class="t r" style="left:635px;width:48px;top:323px">2</div>
<div class="t r" style="left:685px;width:48px;top:323px">0</div>
<div class="t r" style="left:735px;width:48px;top:323px">0</div>
<div class="t r" style="left:785px;width:48px;top:323px">0</div>
<div class="t r" style="left:835px;width:48px;top:323px">0</div>
<div class="t" style="left:142px;top:338px">DR</div>
<div class="t r" style="left:585px;width:48px;top:338px">20</div>
<div class="t r" style="left:635px;width:48px;top:338px">4</div>
<div class="t r" style="left:685px;width:48px;top:338px">0</div>
<div class="t r" style="left:735px;width:48px;top:338px">0</div>
<div class="t r" style="left:785px;width:48px;top:338px">0</div>
<div class="t r" style="left:835px;width:48px;top:338px">0</div>
<div class="t" style="left:142px;top:353px">DR</div>
<div class="t r" style="left:585px;width:48px;top:353px">20</div>
<div class="t r" style="left:635px;width:48px;top:353px">0</div>
<div class="t r" style="left:685px;width:48px;top:353px">0</div>
<div class="t r" style="left:735px;width:48px;top:353px">0</div>
<div class="t r" style="left:785px;width:48px;top:353px">0</div>
<div class="t r" style="left:835px;width:48px;top:353px">0</div>
<div class="t" style="left:142px;top:368px">DR</div>
<div class="t r" style="left:585px;width:48px;top:368px">20</div>
<div class="t r" style="left:635px;width:48px;top:368px">0</div>
<div class="t r" style="left:685px;width:48px;top:368px">0</div>
<div class="t r" style="left:735px;width:48px;top:368px">0</div>
<div class="t r" style="left:785px;width:48px;top:368px">0</div>
<div class="t r" style="left:835px;width:48px;top:368px">0</div>
<div class="t" style="left:142px;top:383px">DR</div>
<div class="t r" style="left:585px;width:48px;top:383px">20</div>
<div class="t r" style="left:635px;width:48px;top:383px">0</div>
<div class="t r" style="left:685px;width:48px;top:383px">0</div>
<div class="t r" style="left:735px;width:48px;top:383px">0</div>
<div class="t r" style="left:785px;width:48px;top:383px">0</div>
<div class="t r" style="left:835px;width:48px;top:383px">0</div>
<div class="t" style="left:142px;top:398px">DR</div>
<div class="t r" style="left:585px;width:48px;top:398px">20</div>
<div class="t r" style="left:635px;width:48px;top:398px">0</div>
<div class="t r" style="left:685px;width:48px;top:398px">0</div>
<div class="t r" style="left:735px;width:48px;top:398px">0</div>
<div class="t r" style="left:785px;width:48px;top:398px">0</div>
<div class="t r" style="left:835px;width:48px;top:398px">0</div>
<div class="t" style="left:142px;top:413px">DR</div>
<div class="t r" style="left:585px;width:48px;top:413px">20</div>
<div class="t r" style="left:635px;width:48px;top:413px">0</div>
<div class="t r" style="left:685px;width:48px;top:413px">0</div>
<div class="t r" style="left:735px;width:48px;top:413px">0</div>
<div class="t r" style="left:785px;width:48px;top:413px">0</div>
<div class="t r" style="left:835px;width:48px;top:413px">0</div>
<div class="t" style="left:142px;top:428px">DR</div>
<div class="t r" style="left:585px;width:48px;top:428px">20</div>
<div class="t r" style="left:635px;width:48px;top:428px">0</div>
<div class="t r" style="left:685px;width:48px;top:428px">0</div>
<div class="t r" style="left:735px;width:48px;top:428px">0</div>
<div class="t r" style="left:785px;width:48px;top:428px">0</div>
<div class="t r" style="left:835px;width:48px;top:428px">0</div>
<div class="t" style="left:142px;top:443px">DR</div>
<div class="t r" style="left:585px;width:48px;top:443px">21</div>
<div class="t r" style="left:635px;width:48px;top:443px">1</div>
<div class="t r" style="left:685px;width:48px;top:443px">0</div>
<div class="t r" style="left:735px;width:48px;top:443px">0</div>
<div class="t r" style="left:785px;width:48px;top:443px">0</div>
<div class="t r" style="left:835px;width:48px;top:443px">0</div>
<div class="t" style="left:142px;top:458px">DR</div>
<div class="t r" style="left:585px;width:48px;top:458px">21</div>
<div class="t r" style="left:635px;width:48px;top:458px">1</div>
<div class="t r" style="left:685px;width:48px;top:458px">0</div>
<div class="t r" style="left:735px;width:48px;top:458px">0</div>
<div class="t r" style="left:785px;width:48px;top:458px">0</div>
<div class="t r" style="left:835px;width:48px;top:458px">0</div>
<div class="t" style="left:142px;top:473px">DR</div>
<div class="t r" style="left:585px;width:48px;top:473px">24</div>
<div class="t r" style="left:635px;width:48px;top:473px">1</div>
<div class="t r" style="left:685px;width:48px;top:473px">0</div>
<div class="t r" style="left:735px;width:48px;top:473px">0</div>
<div class="t r" style="left:785px;width:48px;top:473px">0</div>
<div class="t r" style="left:835px;width:48px;top:473px">0</div>
<div class="t" style="left:142px;top:488px">DR</div>
<div class="t r" style="left:585px;width:48px;top:488px">21</div>
<div class="t r" style="left:635px;width:48px;top:488px">0</div>
<div class="t r" style="left:685px;width:48px;top:488px">0</div>
<div class="t r" style="left:735px;width:48px;top:488px">0</div>
<div class="t r" style="left:785px;width:48px;top:488px">0</div>
<div class="t r" style="left:835px;width:48px;top:488px">0</div>
<div class="t" style="left:142px;top:503px">DR</div>
<div class="t r" style="left:585px;width:48px;top:503px">22</div>
<div class="t r" style="left:635px;width:48px;top:503px">1</div>
<div class="t r" style="left:685px;width:48px;top:503px">0</div>
<div class="t r" style="left:735px;width:48px;top:503px">0</div>
<div class="t r" style="left:785px;width:48px;top:503px">0</div>
<div class="t r" style="left:835px;width:48px;top:503px">0</div>
<div class="t" style="left:142px;top:518px">DR</div>
<div class="t r" style="left:585px;width:48px;top:518px">24</div>
<div class="t r" style="left:635px;width:48px;top:518px">0</div>
<div class="t r" style="left:685px;width:48px;top:518px">0</div>
<div class="t r" style="left:735px;width:48px;top:518px">0</div>
<div class="t r" style="left:785px;width:48px;top:518px">0</div>
<div class="t r" style="left:835px;width:48px;top:518px">0</div>
<div class="t" style="left:142px;top:533px">DR</div>
<div class="t r" style="left:585px;width:48px;top:533px">33</div>
<div class="t r" style="left:635px;width:48px;top:533px">2</div>
<div class="t r" style="left:685px;width:48px;top:533px">0</div>
<div class="t r" style="left:735px;width:48px;top:533px">0</div>
<div class="t r" style="left:785px;width:48px;top:533px">0</div>
<div class="t r" style="left:835px;width:48px;top:533px">0</div>
<div class="t" style="left:142px;top:548px">DR</div>
<div class="t r" style="left:585px;width:48px;top:548px">13</div>
<div class="t r" style="left:635px;width:48px;top:548px">0</div>
<div class="t r" style="left:685px;width:48px;top:548px">0</div>
<div class="t r" style="left:735px;width:48px;top:548px">0</div>
<div class="t r" style="left:785px;width:48px;top:548px">0</div>
<div class="t r" style="left:835px;width:48px;top:548px">0</div>
<svg class="a" style="left:168px;top:99px" width="17" height="11" viewBox="0 0 17 11"><path d="M4.5 0.5v9 M12.5 0.5v9" stroke="#111" stroke-width="1.3"/><path d="M1 5.5l3.5-3.5 M16 5.5l-3.5-3.5" stroke="#222" stroke-width="1"/><path d="M5 3.5h7" stroke="#333" stroke-width="1" stroke-dasharray="2 1"/><path d="M2 9h13" stroke="#5A1010" stroke-width="2"/></svg>
<svg class="a" style="left:169px;top:115px" width="16" height="11" viewBox="0 0 16 11"><path d="M1 5.5l5-4v8z" fill="#A0103A" stroke="#300" stroke-width="0.8"/><path d="M15 5.5l-5-4v8z" fill="#A0103A" stroke="#300" stroke-width="0.8"/><path d="M8 0v4 M8 5v1 M8 7v4" stroke="#111" stroke-width="1.4"/></svg>
<svg class="a" style="left:169px;top:130px" width="16" height="11" viewBox="0 0 16 11"><path d="M0.8 5.5l6-5v10z" fill="#30E0D8" stroke="#102020" stroke-width="1"/><path d="M15.2 5.5l-6-5v10z" fill="#30E0D8" stroke="#102020" stroke-width="1"/><path d="M8 0.5v10" stroke="#101010" stroke-width="1.2"/></svg>
<div class="a" style="left:137px;top:661px;width:969px;height:1px;background:#A8A594"></div>
<div class="t" style="left:141px;top:663px">31 items (1 selected)</div>
<div class="a" style="left:151px;top:146px;width:475px;height:470px;background:#7485DE;border-radius:7px 7px 0 0;box-shadow:inset 1px 0 0 #6272CC,inset -1px 0 0 #6272CC,inset 0 -1px 0 #5E6ECA"></div>
<div class="a" style="left:152px;top:146px;width:473px;height:30px;background:linear-gradient(#A6C0F2 0px,#9CB4EE 3px,#7994DC 5px,#7592DC 16px,#7E9EE6 19px,#80A2E8 25px,#7888DC 28px,#6E7CD0 30px);border-radius:7px 7px 0 0"></div>
<div class="a" style="left:155px;top:176px;width:467px;height:435px;background:#ECE9D8;border-top:1px solid #fff;border-left:1px solid #fff"></div>
<div class="a" style="left:157px;top:155px;width:15px;height:12px;background:#F4F8FF;border-top:2px solid #1E3C78;box-shadow:1px 1px 0 #2A3C70"></div>
<div class="a" style="left:176px;top:156px;font-weight:bold;font-size:14px;letter-spacing:-0.5px;line-height:15px;color:#DCE6FA;white-space:nowrap">Ping</div>
<div class="a" style="left:600px;top:153px;width:20px;height:20px;background:#B0687E;border:1px solid #E8E0F4;border-radius:3px"></div>
<svg class="a" style="left:600px;top:153px" width="20" height="20" viewBox="0 0 21 21"><path d="M6 6 L15 15 M15 6 L6 15" stroke="#fff" stroke-width="2.2" stroke-linecap="square"/></svg>
<div class="a" style="left:158px;top:180px;width:46px;height:19px;background:#D8D4C6"></div>
<div class="t" style="left:163px;top:182px">General</div>
<div class="a" style="left:204px;top:176px;width:65px;height:24px;background:#ECE9D8;border-left:1px solid #fff;border-right:1px solid #A8A594"></div>
<div class="t" style="left:212px;top:180px">Advanced</div>
<div class="a" style="left:268px;top:199px;width:262px;height:1px;background:#fff"></div>
<div class="a" style="left:529px;top:199px;width:1px;height:131px;background:#A8A594"></div>
<div class="a" style="left:156px;top:329px;width:374px;height:1px;background:#A8A594"></div>
<div class="t r" style="left:150px;width:83px;top:208px">Src. Address:</div>
<div class="a" style="left:239px;top:207px;width:264px;height:18px;background:#ECE9D8;border:1px solid #A8A594"></div>
<svg class="a" style="left:508px;top:214px" width="10" height="6"><path d="M0 0h10l-5 5.5z" fill="#000"/></svg>
<div class="t r" style="left:150px;width:83px;top:234px">Packet Size:</div>
<div class="a" style="left:239px;top:233px;width:282px;height:18px;background:#fff;border:1px solid #A8A594"></div>
<div class="t" style="left:243px;top:234px">50</div>
<div class="t r" style="left:150px;width:83px;top:259px">TTL:</div>
<div class="a" style="left:239px;top:258px;width:264px;height:18px;background:#ECE9D8;border:1px solid #A8A594"></div>
<svg class="a" style="left:508px;top:265px" width="10" height="6"><path d="M0 0h10l-5 5.5z" fill="#000"/></svg>
<div class="t r" style="left:150px;width:83px;top:285px">Routing Table:</div>
<div class="a" style="left:239px;top:284px;width:264px;height:18px;background:#ECE9D8;border:1px solid #A8A594"></div>
<svg class="a" style="left:508px;top:291px" width="10" height="6"><path d="M0 0h10l-5 5.5z" fill="#000"/></svg>
<div class="a" style="left:239px;top:310px;width:12px;height:12px;background:#fff;border:1px solid #A8A594"></div>
<div class="t" style="left:257px;top:309px">Dont Fragment</div>
<div class="a" style="left:535px;top:180px;width:83px;height:23px;border:1px solid #A8A594;border-radius:2px;background:#ECE9D8;box-shadow:inset 1px 1px 0 #fff"></div>
<div class="t c" style="left:535px;top:184px;width:83px">Ping</div>
<div class="a" style="left:535px;top:206px;width:83px;height:23px;border:1px solid #000;border-radius:2px;background:#ECE9D8;box-shadow:inset 1px 1px 0 #fff, inset -1px -1px 0 #8E8B7C"></div>
<div class="t c" style="left:535px;top:210px;width:83px">Stop</div>
<div class="a" style="left:535px;top:232px;width:83px;height:23px;border:1px solid #A8A594;border-radius:2px;background:#ECE9D8;box-shadow:inset 1px 1px 0 #fff"></div>
<div class="t c" style="left:535px;top:236px;width:83px">Close</div>
<div class="a" style="left:535px;top:264px;width:83px;height:23px;border:1px solid #A8A594;border-radius:2px;background:#ECE9D8;box-shadow:inset 1px 1px 0 #fff"></div>
<div class="t c" style="left:535px;top:268px;width:83px">New Window</div>
<div class="a" style="left:155px;top:330px;width:466px;height:263px;background:#fff"></div>
<div class="a" style="left:155px;top:330px;width:466px;height:19px;background:#ECE9D8;border-top:1px solid #A8A594;border-bottom:1px solid #A8A594"></div>
<div class="a" style="left:179px;top:331px;width:1px;height:17px;background:#ACA899"></div>
<div class="a" style="left:180px;top:331px;width:1px;height:17px;background:#fff"></div>
<div class="t" style="left:165px;top:333px">#</div>
<div class="a" style="left:207px;top:331px;width:1px;height:17px;background:#ACA899"></div>
<div class="a" style="left:208px;top:331px;width:1px;height:17px;background:#fff"></div>
<div class="a" style="left:357px;top:331px;width:1px;height:17px;background:#ACA899"></div>
<div class="a" style="left:358px;top:331px;width:1px;height:17px;background:#fff"></div>
<div class="t" style="left:210px;top:333px">Host</div>
<div class="a" style="left:407px;top:331px;width:1px;height:17px;background:#ACA899"></div>
<div class="a" style="left:408px;top:331px;width:1px;height:17px;background:#fff"></div>
<div class="t" style="left:360px;top:333px">Time</div>
<div class="a" style="left:467px;top:331px;width:1px;height:17px;background:#ACA899"></div>
<div class="a" style="left:468px;top:331px;width:1px;height:17px;background:#fff"></div>
<div class="t" style="left:410px;top:333px">Reply Size</div>
<div class="a" style="left:503px;top:331px;width:1px;height:17px;background:#ACA899"></div>
<div class="a" style="left:504px;top:331px;width:1px;height:17px;background:#fff"></div>
<div class="t" style="left:470px;top:333px">TTL</div>
<div class="a" style="left:603px;top:331px;width:1px;height:17px;background:#ACA899"></div>
<div class="a" style="left:604px;top:331px;width:1px;height:17px;background:#fff"></div>
<div class="t" style="left:506px;top:333px">Status</div>
<div class="a" style="left:621px;top:331px;width:1px;height:17px;background:#ACA899"></div>
<div class="a" style="left:622px;top:331px;width:1px;height:17px;background:#fff"></div>
<svg class="a" style="left:607px;top:338px" width="10" height="6"><path d="M0 0h10l-5 5.5z" fill="#000"/></svg>
<div class="a" style="left:155px;top:363px;width:466px;height:1px;background:#EFEFE8"></div>
<div class="a" style="left:155px;top:378px;width:466px;height:1px;background:#EFEFE8"></div>
<div class="a" style="left:155px;top:393px;width:466px;height:1px;background:#EFEFE8"></div>
<div class="a" style="left:155px;top:408px;width:466px;height:1px;background:#EFEFE8"></div>
<div class="a" style="left:155px;top:423px;width:466px;height:1px;background:#EFEFE8"></div>
<div class="a" style="left:155px;top:438px;width:466px;height:1px;background:#EFEFE8"></div>
<div class="a" style="left:155px;top:453px;width:466px;height:1px;background:#EFEFE8"></div>
<div class="a" style="left:155px;top:468px;width:466px;height:1px;background:#EFEFE8"></div>
<div class="a" style="left:155px;top:483px;width:466px;height:1px;background:#EFEFE8"></div>
<div class="a" style="left:155px;top:498px;width:466px;height:1px;background:#EFEFE8"></div>
<div class="a" style="left:155px;top:513px;width:466px;height:1px;background:#EFEFE8"></div>
<div class="a" style="left:155px;top:528px;width:466px;height:1px;background:#EFEFE8"></div>
<div class="a" style="left:155px;top:543px;width:466px;height:1px;background:#EFEFE8"></div>
<div class="a" style="left:155px;top:558px;width:466px;height:1px;background:#EFEFE8"></div>
<div class="a" style="left:155px;top:573px;width:466px;height:1px;background:#EFEFE8"></div>
<div class="a" style="left:179px;top:349px;width:1px;height:225px;background:#F0EFE6"></div>
<div class="a" style="left:207px;top:349px;width:1px;height:225px;background:#F0EFE6"></div>
<div class="a" style="left:357px;top:349px;width:1px;height:225px;background:#F0EFE6"></div>
<div class="a" style="left:407px;top:349px;width:1px;height:225px;background:#F0EFE6"></div>
<div class="a" style="left:467px;top:349px;width:1px;height:225px;background:#F0EFE6"></div>
<div class="a" style="left:503px;top:349px;width:1px;height:225px;background:#F0EFE6"></div>
<div class="a" style="left:603px;top:349px;width:1px;height:225px;background:#F0EFE6"></div>
<div class="t r" style="left:155px;width:22px;top:348px">0</div>
<div class="t" style="left:210px;top:348px">10.30.2.81</div>
<div class="t" style="left:360px;top:348px">62ms</div>
<div class="t r" style="left:407px;width:58px;top:348px">50</div>
<div class="t r" style="left:467px;width:34px;top:348px">64</div>
<div class="t r" style="left:155px;width:22px;top:363px">1</div>
<div class="t" style="left:210px;top:363px">10.30.2.81</div>
<div class="t" style="left:360px;top:363px">20ms</div>
<div class="t r" style="left:407px;width:58px;top:363px">50</div>
<div class="t r" style="left:467px;width:34px;top:363px">64</div>
<div class="t r" style="left:155px;width:22px;top:378px">2</div>
<div class="t" style="left:210px;top:378px">10.30.2.81</div>
<div class="t" style="left:360px;top:378px">9ms</div>
<div class="t r" style="left:407px;width:58px;top:378px">50</div>
<div class="t r" style="left:467px;width:34px;top:378px">64</div>
<div class="t r" style="left:155px;width:22px;top:393px">3</div>
<div class="t" style="left:210px;top:393px">10.30.2.81</div>
<div class="t" style="left:360px;top:393px">83ms</div>
<div class="t r" style="left:407px;width:58px;top:393px">50</div>
<div class="t r" style="left:467px;width:34px;top:393px">64</div>
<div class="t r" style="left:155px;width:22px;top:408px">4</div>
<div class="t" style="left:210px;top:408px">10.30.2.81</div>
<div class="t" style="left:360px;top:408px">2ms</div>
<div class="t r" style="left:407px;width:58px;top:408px">50</div>
<div class="t r" style="left:467px;width:34px;top:408px">64</div>
<div class="t r" style="left:155px;width:22px;top:423px">5</div>
<div class="t" style="left:210px;top:423px">10.30.2.81</div>
<div class="t" style="left:360px;top:423px">49ms</div>
<div class="t r" style="left:407px;width:58px;top:423px">50</div>
<div class="t r" style="left:467px;width:34px;top:423px">64</div>
<div class="t r" style="left:155px;width:22px;top:438px">6</div>
<div class="t" style="left:210px;top:438px">10.30.2.81</div>
<div class="t" style="left:360px;top:438px">27ms</div>
<div class="t r" style="left:407px;width:58px;top:438px">50</div>
<div class="t r" style="left:467px;width:34px;top:438px">64</div>
<div class="t r" style="left:155px;width:22px;top:453px">7</div>
<div class="t" style="left:210px;top:453px">10.30.2.81</div>
<div class="t" style="left:360px;top:453px">178ms</div>
<div class="t r" style="left:407px;width:58px;top:453px">50</div>
<div class="t r" style="left:467px;width:34px;top:453px">64</div>
<div class="t r" style="left:155px;width:22px;top:468px">8</div>
<div class="t" style="left:210px;top:468px">10.30.2.81</div>
<div class="t" style="left:360px;top:468px">495ms</div>
<div class="t r" style="left:407px;width:58px;top:468px">50</div>
<div class="t r" style="left:467px;width:34px;top:468px">64</div>
<div class="t r" style="left:155px;width:22px;top:483px">9</div>
<div class="t" style="left:210px;top:483px">10.30.2.81</div>
<div class="t" style="left:360px;top:483px">662ms</div>
<div class="t r" style="left:407px;width:58px;top:483px">50</div>
<div class="t r" style="left:467px;width:34px;top:483px">64</div>
<div class="t r" style="left:155px;width:22px;top:498px">10</div>
<div class="t" style="left:210px;top:498px">10.30.2.81</div>
<div class="t" style="left:360px;top:498px">869ms</div>
<div class="t r" style="left:407px;width:58px;top:498px">50</div>
<div class="t r" style="left:467px;width:34px;top:498px">64</div>
<div class="t r" style="left:155px;width:22px;top:513px">11</div>
<div class="t" style="left:210px;top:513px">10.30.2.81</div>
<div class="t" style="left:360px;top:513px">timeout</div>
<div class="t r" style="left:155px;width:22px;top:528px">12</div>
<div class="t" style="left:210px;top:528px">10.30.2.81</div>
<div class="t" style="left:360px;top:528px">timeout</div>
<div class="t r" style="left:155px;width:22px;top:543px">13</div>
<div class="t" style="left:210px;top:543px">10.30.2.81</div>
<div class="t" style="left:360px;top:543px">timeout</div>
<div class="t r" style="left:155px;width:22px;top:558px">14</div>
<div class="t" style="left:210px;top:558px">10.30.2.81</div>
<div class="t" style="left:360px;top:558px">timeout</div>
<div class="a" style="left:155px;top:593px;width:466px;height:18px;background:#ECE9D8"></div>
<div class="a" style="left:155px;top:593px;width:140px;height:18px;border-top:1px solid #A8A594;border-left:1px solid #A8A594;box-shadow:inset 1px 1px 0 #fff"></div>
<div class="t" style="left:157px;top:595px">11 of 15 packets received</div>
<div class="a" style="left:297px;top:593px;width:109px;height:18px;border-top:1px solid #A8A594;border-left:1px solid #A8A594;box-shadow:inset 1px 1px 0 #fff"></div>
<div class="t" style="left:299px;top:595px">26% packet loss</div>
<div class="a" style="left:408px;top:593px;width:67px;height:18px;border-top:1px solid #A8A594;border-left:1px solid #A8A594;box-shadow:inset 1px 1px 0 #fff"></div>
<div class="t" style="left:410px;top:595px">Min: 2ms</div>
<div class="a" style="left:477px;top:593px;width:67px;height:18px;border-top:1px solid #A8A594;border-left:1px solid #A8A594;box-shadow:inset 1px 1px 0 #fff"></div>
<div class="t" style="left:479px;top:595px">Avg: 223ms</div>
<div class="a" style="left:546px;top:593px;width:75px;height:18px;border-top:1px solid #A8A594;border-left:1px solid #A8A594;box-shadow:inset 1px 1px 0 #fff"></div>
<div class="t" style="left:548px;top:595px">Max: 869ms</div>
</body></html>
